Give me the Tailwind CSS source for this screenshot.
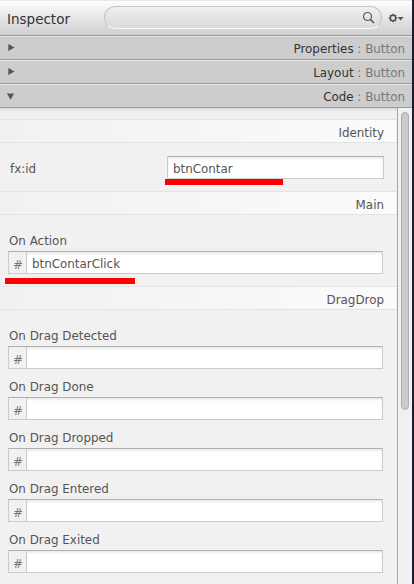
<!DOCTYPE html>
<html lang="en">
<head>
<meta charset="utf-8">
<title>Inspector</title>
<script src="https://cdn.jsdelivr.net/npm/@tailwindcss/browser@4"></script>
</head>
<body class="w-[414px] h-[584px] overflow-hidden bg-[#1a1e26] font-['DejaVu_Sans',sans-serif] text-[11.9px] leading-[14px] text-[#555]">
<div class="w-[412px] h-[584px] flex flex-col bg-[#f1f1f1]">
  <header class="h-9 shrink-0 flex items-center pl-[7px] border-t border-b border-t-[#e8e8e8] border-b-[#9b9b9b] bg-linear-to-b from-[#fdfdfd] to-[#cfcfcf]">
    <h1 class="w-[97px] shrink-0 pt-px text-[13.5px] leading-4 text-[#333]">Inspector</h1>
    <div class="w-[278px] h-[23px] shrink-0 -mt-px rounded-full border border-[#c6c6c6] border-b-[#f5f5f5] bg-linear-to-b from-[#f0f0f0] to-[#dadada] flex items-center justify-end pr-[6px]">
      <svg class="size-[13px]" viewBox="0 0 13 13" fill="none" stroke="#555"><circle cx="5.5" cy="5.5" r="4" stroke-width="1.2"/><path d="M8.5 8.5L12 12" stroke-width="1.6"/></svg>
    </div>
    <svg class="ml-[6px] w-4 h-[10px] shrink-0" viewBox="0 0 16 10" fill="none" stroke="#555"><circle cx="5" cy="5" r="2.7" stroke-width="1.5"/><path d="M5 .8V2M5 8v1.2M.8 5H2M8 5h1.2M2 2l.9.9M7.1 7.1l.9.9M8 2l-.9.9M2.9 7.1L2 8" stroke-width="1.5"/><path d="M9.6 4h6l-3 3.6z" fill="#555" stroke="none"/></svg>
  </header>
  <div class="h-6 shrink-0 flex items-center justify-between pl-2 pr-[7px] border-t border-b border-t-[#e6e6e6] border-b-[#9b9b9b] bg-[#cdcdcd]">
    <svg class="size-[7px] -mt-[2px]" viewBox="0 0 7 7" fill="#555"><path d="M.3 0L6.5 3.5.3 7z"/></svg>
    <div class="pt-[2px] text-[#777]"><span class="text-[#333]">Properties</span> : Button</div>
  </div>
  <div class="h-6 shrink-0 flex items-center justify-between pl-2 pr-[7px] border-t border-b border-t-[#e6e6e6] border-b-[#9b9b9b] bg-[#cdcdcd]">
    <svg class="size-[7px] -mt-[2px]" viewBox="0 0 7 7" fill="#555"><path d="M.3 0L6.5 3.5.3 7z"/></svg>
    <div class="pt-[2px] text-[#777]"><span class="text-[#333]">Layout</span> : Button</div>
  </div>
  <div class="h-6 shrink-0 flex items-center justify-between pl-[7px] pr-[7px] border-t border-b border-t-[#e6e6e6] border-b-[#9b9b9b] bg-[#cdcdcd]">
    <svg class="size-[7px]" viewBox="0 0 7 7" fill="#555"><path d="M0 .5h7L3.5 6.8z"/></svg>
    <div class="pt-[2px] text-[#777]"><span class="text-[#333]">Code</span> : Button</div>
  </div>
  <div class="flex-1 min-h-0 flex">
    <main class="w-[397px] shrink-0 pt-[11px] shadow-[inset_0_3px_3px_-2px_#d0d0d0] overflow-hidden">
      <h2 class="h-6 mr-px pr-[12px] pt-[6px] text-right border-y border-[#e3e3e3] bg-linear-to-r from-[#f1f1f1] to-[#fbfbfb]">Identity</h2>
      <div class="relative h-12 pt-[13px] pl-[10px] flex items-start">
        <label class="w-[157px] pt-[6px]">fx:id</label>
        <div class="w-[217px] h-[23px] pl-[5px] pt-[5px] border border-[#cbcbcb] border-t-[#b0b0b0] bg-white shadow-[inset_0_2px_2px_#ececec]">btnContar</div>
        <div class="absolute left-[165px] top-9 w-[118px] h-[6px] bg-[#f00]"></div>
      </div>
      <h2 class="h-6 mr-px pr-[12px] pt-[6px] text-right border-y border-[#e3e3e3] bg-linear-to-r from-[#f1f1f1] to-[#fbfbfb]">Main</h2>
      <div class="relative h-[71px] pt-[19px] pl-2">
        <label class="block h-[17px] pl-px">On Action</label>
        <div class="w-[375px] h-[23px] flex border border-[#cbcbcb] border-t-[#b0b0b0]">
          <span class="w-[18px] pl-[4px] pt-[6px] border-r border-[#cbcbcb] text-[#777]">#</span>
          <span class="flex-1 pl-[5px] pt-[5px] bg-white shadow-[inset_0_2px_2px_#ececec]">btnContarClick</span>
        </div>
        <div class="absolute left-[5px] top-[63px] w-[130px] h-[6px] bg-[#f00]"></div>
      </div>
      <h2 class="h-6 mr-px pr-[12px] pt-[6px] text-right border-y border-[#e3e3e3] bg-linear-to-r from-[#f1f1f1] to-[#fbfbfb]">DragDrop</h2>
      <div class="pt-[19px] pl-2 flex flex-col gap-[11px]">
        <div><label class="block h-[17px] pl-px">On Drag Detected</label><div class="w-[375px] h-[23px] flex border border-[#cbcbcb] border-t-[#b0b0b0]"><span class="w-[18px] pl-[4px] pt-[6px] border-r border-[#cbcbcb] text-[#777]">#</span><span class="flex-1 bg-white shadow-[inset_0_2px_2px_#ececec]"></span></div></div>
        <div><label class="block h-[17px] pl-px">On Drag Done</label><div class="w-[375px] h-[23px] flex border border-[#cbcbcb] border-t-[#b0b0b0]"><span class="w-[18px] pl-[4px] pt-[6px] border-r border-[#cbcbcb] text-[#777]">#</span><span class="flex-1 bg-white shadow-[inset_0_2px_2px_#ececec]"></span></div></div>
        <div><label class="block h-[17px] pl-px">On Drag Dropped</label><div class="w-[375px] h-[23px] flex border border-[#cbcbcb] border-t-[#b0b0b0]"><span class="w-[18px] pl-[4px] pt-[6px] border-r border-[#cbcbcb] text-[#777]">#</span><span class="flex-1 bg-white shadow-[inset_0_2px_2px_#ececec]"></span></div></div>
        <div><label class="block h-[17px] pl-px">On Drag Entered</label><div class="w-[375px] h-[23px] flex border border-[#cbcbcb] border-t-[#b0b0b0]"><span class="w-[18px] pl-[4px] pt-[6px] border-r border-[#cbcbcb] text-[#777]">#</span><span class="flex-1 bg-white shadow-[inset_0_2px_2px_#ececec]"></span></div></div>
        <div><label class="block h-[17px] pl-px">On Drag Exited</label><div class="w-[375px] h-[23px] flex border border-[#cbcbcb] border-t-[#b0b0b0]"><span class="w-[18px] pl-[4px] pt-[6px] border-r border-[#cbcbcb] text-[#777]">#</span><span class="flex-1 bg-white shadow-[inset_0_2px_2px_#ececec]"></span></div></div>
      </div>
    </main>
    <div class="w-[15px] shrink-0 pl-[3px] pt-[4px] border-l border-[#a5a5a5] bg-[#f1f1f1]">
      <div class="w-2 h-[298px] rounded-full border border-[#afafaf] bg-[#cbcbcb]"></div>
    </div>
  </div>
</div>
</body>
</html>
